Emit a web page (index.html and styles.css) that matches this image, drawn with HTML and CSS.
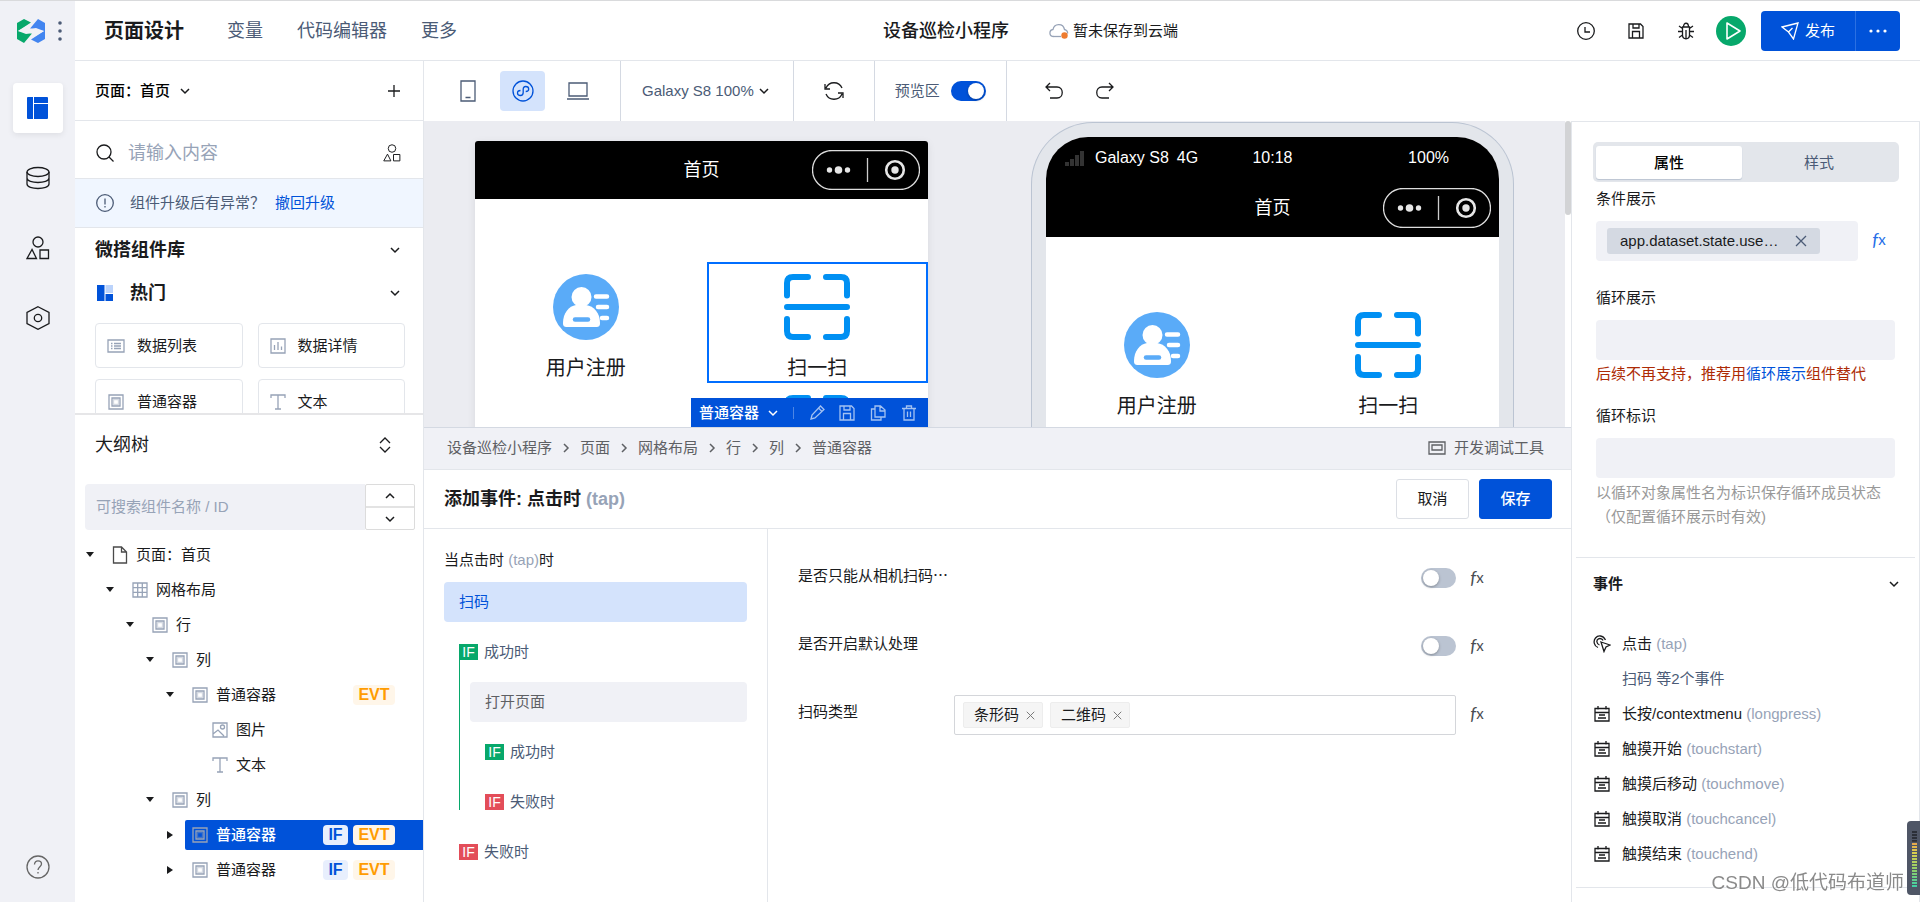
FILE: index.html
```html
<!DOCTYPE html>
<html lang="zh-CN">
<head>
<meta charset="utf-8">
<title>页面设计 - 设备巡检小程序</title>
<link rel="stylesheet" href="styles.css">
</head>
<body>
<svg class="defs" aria-hidden="true">
  <symbol id="i-down" viewBox="0 0 10 10"><path d="M1 3l4 4 4-4"/></symbol>
  <symbol id="i-up" viewBox="0 0 10 10"><path d="M1 7l4-4 4 4"/></symbol>
  <symbol id="i-right" viewBox="0 0 10 10"><path d="M3 1l4 4-4 4"/></symbol>
  <symbol id="i-x" viewBox="0 0 12 12"><path d="M1 1l10 10M11 1L1 11"/></symbol>
  <symbol id="i-box" viewBox="0 0 16 16"><path d="M1 1h14v14H1zM4 4h8v8H4z"/><path d="M5.500 5.500h5v5h-5z" opacity=".4"/></symbol>
  <symbol id="i-grid" viewBox="0 0 16 16"><path d="M1 1h14v14H1zM5.700 1v14M10.300 1v14M1 5.700h14M1 10.300h14"/></symbol>
  <symbol id="i-text" viewBox="0 0 16 16"><path d="M1 4V1h14v3M8 1v14M5 15h6"/></symbol>
  <symbol id="i-image" viewBox="0 0 16 16"><path d="M1 1h14v14H1zM1 12l5-4 6 6"/><circle cx="10.500" cy="5" r="2"/></symbol>
  <symbol id="i-page" viewBox="0 0 16 18"><path d="M1.500 1h8l5 5v11h-13zM9.500 1v5h5"/></symbol>
  <symbol id="i-list" viewBox="0 0 18 14"><path d="M1 1h16v12H1zM7 4.500h7M7 7h7M7 9.500h7M4 4.500h1.500M4 7h1.500M4 9.500h1.500"/></symbol>
  <symbol id="i-chart" viewBox="0 0 16 16"><path d="M1 1h14v14H1zM4.500 7v5M8 4v8M11.500 8.500V12"/></symbol>
  <symbol id="i-shapes" viewBox="0 0 24 24"><circle cx="12" cy="6" r="5"/><path d="M6 13.500L1 22.500h9.500zM14 14h8.500v8.500H14z"/></symbol>
  <symbol id="i-save" viewBox="0 0 16 16"><path d="M1 1h11.500L15 3.500V15H1zM5 1v4h6V1M4.500 15V8.500h7V15"/></symbol>
  <symbol id="i-event" viewBox="0 0 16 16"><path d="M1 2.500h14V15H1zM1 6.500h14M4 0v3.500M12 0v3.500M5 9h6M4 12h8"/></symbol>
  <symbol id="i-user" viewBox="0 0 66 66"><circle cx="33" cy="33" r="33" fill="#5aabf8"/><circle cx="28.500" cy="23" r="10" fill="#fff"/><path d="M10 49c0-10 6-17 13-18h10c8 1 14 8 14 18 0 3-1 4-4 4H14c-3 0-4-1-4-4z" fill="#fff"/><path d="M43 22.500h11M45 33h9M49 44h5" stroke="#fff" stroke-width="4.500" stroke-linecap="round"/><path d="M22 45.500h13" stroke="#5aabf8" stroke-width="4.500" stroke-linecap="round"/></symbol>
  <symbol id="i-scan" viewBox="0 0 66 66"><path d="M3 21.500V9q0-6 6-6h15M42 3h15q6 0 6 6v12.500M3 45v12q0 6 6 6h15M42 63h15q6 0 6-6V45M3 33h60" fill="none" stroke="#0090f3" stroke-width="6" stroke-linecap="round"/></symbol>
  <symbol id="i-capsule" viewBox="0 0 108 40"><rect x=".5" y=".5" width="107" height="39" rx="19.500" fill="none" stroke="#ddd"/><path d="M55.500 8v24" stroke="#ccc"/><circle cx="17.500" cy="20" r="2.700" fill="#e6e6e6"/><circle cx="26.500" cy="20" r="3.800" fill="#e6e6e6"/><circle cx="35.500" cy="20" r="2.700" fill="#e6e6e6"/><circle cx="83" cy="20" r="8.800" fill="none" stroke="#e6e6e6" stroke-width="2.600"/><circle cx="83" cy="20" r="3.700" fill="#e6e6e6"/></symbol>
</svg>

<div class="app">
  <nav class="rail" aria-label="主导航">
    <div class="brand">
      <svg class="logo" viewBox="0 0 28 24"><path d="M0 4L7 0l7 3.500L1 12l14 2.500L7 24l-7-4z" fill="#07a86b"/><path d="M28 4v16l-7 4-7-3.500L27 12l-14-2.500L21 0z" fill="#4285f0"/><path d="M1 12L14 4.500l2 1-4.500 4.500L19 9l8 3-13 7.500-2-1 4.500-4.500L9 15z" fill="#f0f1f6"/></svg>
      <svg class="kebab" viewBox="0 0 4 20"><circle cx="2" cy="2" r="1.800"/><circle cx="2" cy="10" r="1.800"/><circle cx="2" cy="18" r="1.800"/></svg>
    </div>
    <button class="rail-item active" aria-label="页面设计"><svg viewBox="0 0 22 22"><path d="M0 1a1 1 0 011-1h5v22H1a1 1 0 01-1-1zM7 0h13a1 1 0 011 1v5H7zM7 7h14v14a1 1 0 01-1 1H7z" fill="#0052d9"/></svg></button>
    <button class="rail-item" aria-label="数据源"><svg viewBox="0 0 24 24"><ellipse cx="12" cy="6" rx="11" ry="4.500"/><path d="M1 6v12c0 6 22 6 22 0V6M1 12c0 6 22 6 22 0"/></svg></button>
    <button class="rail-item" aria-label="组件"><svg><use href="#i-shapes"/></svg></button>
    <button class="rail-item" aria-label="设置"><svg viewBox="0 0 24 24"><path d="M12 .7l11 5.800v11L12 23.300 1 17.500v-11z"/><circle cx="12" cy="12" r="3.700"/></svg></button>
    <button class="rail-item help" aria-label="帮助"><svg viewBox="0 0 24 24"><circle cx="12" cy="12" r="11"/><path d="M8.500 9.500c0-5 7-4.500 7-.5 0 2.500-3.500 3-3.500 6M12 17v1.500"/></svg></button>
  </nav>

  <div class="main">
    <header class="topbar">
      <nav class="menu">
        <a class="current" href="#">页面设计</a><a href="#">变量</a><a href="#">代码编辑器</a><a href="#">更多</a>
      </nav>
      <div class="doc">
        <h1>设备巡检小程序</h1>
        <span class="cloud"><svg viewBox="0 0 20 16"><path d="M5 13.500c-5.500 0-5-6.500-1-7 1-6 10-7 11.500 0 2 .5 3.500 2 3 4" fill="none" stroke="#97a3b7" stroke-width="1.300"/><path d="M5 13.500h7" stroke="#97a3b7" stroke-width="1.300"/><circle cx="15.500" cy="12.500" r="3.200" fill="#ed7b2f"/></svg>暂未保存到云端</span>
      </div>
      <div class="actions">
        <button class="icon-btn" aria-label="历史"><svg viewBox="0 0 18 18"><circle cx="9" cy="9" r="8.300"/><path d="M8 5v5h5"/></svg></button>
        <button class="icon-btn" aria-label="保存"><svg><use href="#i-save"/></svg></button>
        <button class="icon-btn" aria-label="调试"><svg viewBox="0 0 18 18"><path d="M5.500 5h7v8c0 5-7 5-7 0zM6.500 5c0-5 5-5 5 0M9 8v8M1 9.500h4.500M12.500 9.500H17M2 4l3.500 2.500M16 4l-3.500 2.500M2 15.500L5.500 13M16 15.500L12.500 13"/></svg></button>
        <button class="run" aria-label="预览"><svg viewBox="0 0 30 30"><path d="M11 7v16l13-8z"/></svg></button>
        <div class="publish">
          <button class="pub-main"><svg viewBox="0 0 18 18"><path d="M1 5L17 1l-4.500 16-5-7zM7.500 10l4-4"/></svg>发布</button>
          <button class="pub-more" aria-label="更多"><svg viewBox="0 0 18 4"><circle cx="2" cy="2" r="1.600"/><circle cx="9" cy="2" r="1.600"/><circle cx="16" cy="2" r="1.600"/></svg></button>
        </div>
      </div>
    </header>

    <div class="workspace">
      <aside class="left">
        <div class="page-select">
          <button class="plain strong">页面：首页 <svg class="chev"><use href="#i-down"/></svg></button>
          <button class="plain" aria-label="新建页面"><svg class="plus" viewBox="0 0 12 12"><path d="M6 0v12M0 6h12"/></svg></button>
        </div>
        <div class="library">
          <div class="lib-search">
            <svg class="s18" viewBox="0 0 18 18"><circle cx="8" cy="8" r="7"/><path d="M13 13l4.500 4.500"/></svg>
            <input type="search" placeholder="请输入内容" aria-label="搜索组件">
            <svg class="s18"><use href="#i-shapes"/></svg>
          </div>
          <div class="notice">
            <svg class="s18" viewBox="0 0 18 18"><circle cx="9" cy="9" r="8.300"/><path d="M9 4.500v6M9 12v1.500"/></svg>
            <span>组件升级后有异常？</span><a href="#">撤回升级</a>
          </div>
          <h2 class="group">微搭组件库<svg class="chev"><use href="#i-down"/></svg></h2>
          <h3 class="group hot"><svg class="hot-icon" viewBox="0 0 16 16"><path d="M0 0h7.500v16H0zM8.500 9H16v7H8.500z" fill="#0052d9"/><path d="M8.500 0H16v8H8.500z" fill="#bbd3fb"/></svg>热门<svg class="chev"><use href="#i-down"/></svg></h3>
          <div class="cards">
            <button class="card"><svg class="wide"><use href="#i-list"/></svg>数据列表</button>
            <button class="card"><svg><use href="#i-chart"/></svg>数据详情</button>
            <button class="card"><svg class="wide"><use href="#i-box"/></svg>普通容器</button>
            <button class="card"><svg><use href="#i-text"/></svg>文本</button>
          </div>
        </div>
        <section class="outline">
          <h2>大纲树<svg viewBox="0 0 12 16"><path d="M1 6l5-5 5 5M1 10l5 5 5-5"/></svg></h2>
          <div class="tree-search">
            <input type="text" placeholder="可搜索组件名称 / ID" aria-label="搜索大纲树">
            <div class="stepper">
              <button aria-label="上一个"><svg class="chev"><use href="#i-up"/></svg></button>
              <button aria-label="下一个"><svg class="chev"><use href="#i-down"/></svg></button>
            </div>
          </div>
          <ul class="tree">
            <li class="d0"><i class="caret open"></i><div class="node"><svg class="dark"><use href="#i-page"/></svg>页面：首页</div></li>
            <li class="d1"><i class="caret open"></i><div class="node"><svg><use href="#i-grid"/></svg>网格布局</div></li>
            <li class="d2"><i class="caret open"></i><div class="node"><svg><use href="#i-box"/></svg>行</div></li>
            <li class="d3"><i class="caret open"></i><div class="node"><svg><use href="#i-box"/></svg>列</div></li>
            <li class="d4"><i class="caret open"></i><div class="node"><svg><use href="#i-box"/></svg>普通容器<span class="tags"><b class="evt">EVT</b></span></div></li>
            <li class="d5"><i class="caret"></i><div class="node"><svg><use href="#i-image"/></svg>图片</div></li>
            <li class="d5"><i class="caret"></i><div class="node"><svg><use href="#i-text"/></svg>文本</div></li>
            <li class="d3"><i class="caret open"></i><div class="node"><svg><use href="#i-box"/></svg>列</div></li>
            <li class="d4"><i class="caret closed"></i><div class="node selected"><svg><use href="#i-box"/></svg>普通容器<span class="tags"><b class="if">IF</b><b class="evt">EVT</b></span></div></li>
            <li class="d4"><i class="caret closed"></i><div class="node"><svg><use href="#i-box"/></svg>普通容器<span class="tags"><b class="if">IF</b><b class="evt">EVT</b></span></div></li>
          </ul>
        </section>
      </aside>

      <div class="editor">
        <div class="toolbar">
          <div class="tool devices">
            <button class="device" aria-label="手机"><svg viewBox="0 0 16 22"><path d="M1 1h14v20H1zM5.500 17.500h5"/></svg></button>
            <button class="device on" aria-label="小程序"><svg class="mini" viewBox="0 0 22 22"><circle cx="11" cy="11" r="10"/><path d="M8.500 10.500c-4 0-4 5 0 5 1.700 0 2.700-1 2.700-3v-3c0-2 1-3 2.500-3 4 0 4 5 0 5"/></svg></button>
            <button class="device" aria-label="电脑"><svg class="pc" viewBox="0 0 22 18"><path d="M2 1h18v13H2zM0 17h22"/></svg></button>
          </div>
          <div class="tool zoom"><button class="plain">Galaxy S8 100%<svg class="chev"><use href="#i-down"/></svg></button></div>
          <div class="tool reload"><button class="plain" aria-label="刷新"><svg viewBox="0 0 20 20"><path d="M2 7c3-7 13-7 16 0M18 13c-3 7-13 7-16 0M1 3v5h5M19 17v-5h-5"/></svg></button></div>
          <div class="tool preview"><label for="pv">预览区</label><input id="pv" type="checkbox" class="switch" checked></div>
          <div class="tool history">
            <button class="plain" aria-label="撤销"><svg viewBox="0 0 18 18"><path d="M5 1L1 5l4 4M1 5h11c7 0 7 11 0 11H5"/></svg></button>
            <button class="plain" aria-label="重做"><svg viewBox="0 0 18 18"><path d="M13 1l4 4-4 4M17 5H6c-7 0-7 11 0 11h7"/></svg></button>
          </div>
        </div>

        <div class="panes">
          <div class="centre">
            <div class="stage">
              <div class="canvas">
                <div class="navbar"><span>首页</span><svg class="capsule"><use href="#i-capsule"/></svg></div>
                <div class="grid">
                  <div class="col"><div class="cell"><svg><use href="#i-user"/></svg>用户注册</div></div>
                  <div class="col">
                    <div class="cell picked"><svg><use href="#i-scan"/></svg>扫一扫
                      <div class="cell-bar"><button class="plain">普通容器<svg class="chev"><use href="#i-down"/></svg></button><hr>
                        <button class="plain" aria-label="编辑"><svg viewBox="0 0 16 16"><path d="M2 14l1-4 8.500-9L15 4.500 6 13zM9.500 3l3.500 3.500"/></svg></button>
                        <button class="plain" aria-label="保存"><svg><use href="#i-save"/></svg></button>
                        <button class="plain" aria-label="复制"><svg viewBox="0 0 16 16"><path d="M5 1h5.500L15 5v7H5zM10 1v5h5M5 4H1.500v11H11v-3"/></svg></button>
                        <button class="plain" aria-label="删除"><svg viewBox="0 0 16 16"><path d="M1 3.500h14M5.500 3V1h5v2M3 3.500V15h10V3.500M6.500 6.500v5.500M9.500 6.500v5.500"/></svg></button>
                      </div>
                    </div>
                    <div class="cell"><svg><use href="#i-scan"/></svg></div>
                  </div>
                </div>
              </div>
              <div class="phone">
                <div class="screen">
                  <div class="status"><span class="carrier"><svg viewBox="0 0 20 15"><path d="M0 11h4v4H0zM5 8h4v7H5zM10 4h4v11h-4zM15 0h4v15h-4z" fill="#333"/></svg>Galaxy S8&ensp;4G</span><span>10:18</span><span class="battery">100%</span></div>
                  <div class="navbar"><span>首页</span><svg class="capsule"><use href="#i-capsule"/></svg></div>
                  <div class="grid">
                    <div class="col"><div class="cell"><svg><use href="#i-user"/></svg>用户注册</div></div>
                    <div class="col"><div class="cell"><svg><use href="#i-scan"/></svg>扫一扫</div></div>
                  </div>
                </div>
              </div>
              <div class="scrollbar"></div>
            </div>

            <div class="crumbs">
              <span>设备巡检小程序</span><svg class="chev"><use href="#i-right"/></svg><span>页面</span><svg class="chev"><use href="#i-right"/></svg><span>网格布局</span><svg class="chev"><use href="#i-right"/></svg><span>行</span><svg class="chev"><use href="#i-right"/></svg><span>列</span><svg class="chev"><use href="#i-right"/></svg><span>普通容器</span>
              <button class="plain devtools"><svg viewBox="0 0 18 14"><path d="M1 1h16v12H1zM4 4h10v5H4z"/></svg>开发调试工具</button>
            </div>

            <section class="event">
              <header class="event-head">
                <h2>添加事件: 点击时 <em>(tap)</em></h2>
                <button class="btn">取消</button><button class="btn primary">保存</button>
              </header>
              <div class="event-body">
                <div class="flow">
                  <p>当点击时 <em>(tap)</em>时</p>
                  <button class="step on">扫码</button>
                  <div class="branch line">
                    <div class="cond"><span class="flag">IF</span>成功时</div>
                    <div class="nested">
                      <button class="step">打开页面</button>
                      <div class="inner">
                        <div class="cond"><span class="flag">IF</span>成功时</div>
                        <div class="cond"><span class="flag fail">IF</span>失败时</div>
                      </div>
                    </div>
                  </div>
                  <div class="branch"><div class="cond"><span class="flag fail">IF</span>失败时</div></div>
                </div>
                <form class="form">
                  <div class="row"><label for="cam">是否只能从相机扫码…</label><input id="cam" type="checkbox" class="switch"><button type="button" class="fx"><i>f</i>x</button></div>
                  <div class="row"><label for="def">是否开启默认处理</label><input id="def" type="checkbox" class="switch"><button type="button" class="fx"><i>f</i>x</button></div>
                  <div class="row"><span class="lbl">扫码类型</span>
                    <div class="multi"><span class="chip">条形码<svg><use href="#i-x"/></svg></span><span class="chip">二维码<svg><use href="#i-x"/></svg></span></div>
                    <button type="button" class="fx"><i>f</i>x</button></div>
                </form>
              </div>
            </section>
          </div>

          <aside class="props">
            <div class="tabs"><button class="on">属性</button><button>样式</button></div>
            <div class="fields">
              <span class="lbl">条件展示</span>
              <div class="bind"><div class="box"><span class="expr">app.dataset.state.use…<svg><use href="#i-x"/></svg></span></div><button class="fx blue"><i>f</i>x</button></div>
              <label class="lbl" for="loop">循环展示</label>
              <input id="loop" type="text" class="box">
              <p class="warn">后续不再支持，推荐用<a href="#">循环展示</a>组件替代</p>
              <label class="lbl" for="key">循环标识</label>
              <input id="key" type="text" class="box">
              <p class="hint">以循环对象属性名为标识保存循环成员状态（仅配置循环展示时有效)</p>
            </div>
            <section class="events">
              <h2>事件<svg class="chev"><use href="#i-down"/></svg></h2>
              <ul>
                <li><svg class="tap" viewBox="0 0 18 18"><path d="M8 7l9 3-4 2-2 4.500zM5 12.500C1 11 0 6 2.500 3S10 0 12.500 5M6.500 10C3.500 9 3 5 5.500 3.800 7.500 3 9.500 4 10 5.500"/></svg><span>点击 <em>(tap)</em></span></li>
                <li><a href="#">扫码 等2个事件</a></li>
                <li><svg><use href="#i-event"/></svg><span>长按/contextmenu <em>(longpress)</em></span></li>
                <li><svg><use href="#i-event"/></svg><span>触摸开始 <em>(touchstart)</em></span></li>
                <li><svg><use href="#i-event"/></svg><span>触摸后移动 <em>(touchmove)</em></span></li>
                <li><svg><use href="#i-event"/></svg><span>触摸取消 <em>(touchcancel)</em></span></li>
                <li><svg><use href="#i-event"/></svg><span>触摸结束 <em>(touchend)</em></span></li>
              </ul>
            </section>
          </aside>
        </div>
      </div>
    </div>
  </div>
</div>
<div class="meter"></div>
<div class="watermark">CSDN @低代码布道师</div>
</body>
</html>
```

FILE: styles.css
```css
* { box-sizing: border-box; }
body, h1, h2, h3, p, ul { margin: 0; padding: 0; }
body { font: 15px/24px "Liberation Sans", "Noto Sans CJK SC", sans-serif; color: #1a1b1d; background: #fff; }
ul { list-style: none; }
a { color: #0052d9; text-decoration: none; }
em { font-style: normal; color: #97a3b7; }
button, input { font: inherit; color: inherit; margin: 0; }
button { padding: 0; border: 0; background: none; display: flex; align-items: center; justify-content: center; }
svg { fill: none; stroke: currentColor; stroke-width: 1.300; flex: none; display: block; }
.defs { position: absolute; width: 0; height: 0; }
#i-user, #i-scan, #i-capsule { stroke: none; }
.chev { width: 10px; height: 10px; stroke-width: 1.500; color: #1a1b1d; }
.strong { font-weight: 500; color: #000; }

.app { display: flex; height: 100vh; min-height: 800px; border-top: 1px solid #d9dadc; }
.main { flex: 1; min-width: 0; display: flex; flex-direction: column; }

/* navigation rail */
.rail { width: 75px; flex: none; background: #f0f1f6; display: flex; flex-direction: column; align-items: center; gap: 20px; padding-bottom: 10px; }
.brand { align-self: stretch; display: flex; align-items: center; gap: 13px; height: 60px; padding-left: 17px; margin-bottom: 2px; }
.logo { width: 28px; height: 24px; stroke: none; }
.kebab { width: 4px; height: 20px; stroke: none; fill: #4b5b76; }
.rail-item { width: 50px; height: 50px; border-radius: 4px; }
.rail-item svg { width: 24px; height: 24px; }
.rail-item.active { background: #fff; box-shadow: 0 2px 6px rgba(0, 0, 0, .08); }
.rail-item.active svg { width: 22px; height: 22px; stroke: none; }
.rail-item.help { margin-top: auto; color: #666; }

/* top bar */
.topbar { height: 60px; flex: none; display: grid; grid-template-columns: 1fr auto 1fr; align-items: center; border-bottom: 1px solid #e3e6eb; padding: 0 20px 0 29px; }
.menu { display: flex; align-items: center; gap: 34px; font-size: 18px; }
.menu a { color: #4b5b76; }
.menu .current { font-size: 20px; font-weight: 700; color: #1a1b1d; margin-right: 9px; }
.doc { display: flex; align-items: center; gap: 40px; margin-left: 57px; }
.doc h1 { font-size: 18px; font-weight: 500; }
.cloud { display: flex; align-items: center; gap: 4px; }
.cloud svg { width: 20px; height: 16px; stroke: none; }
.actions { display: flex; align-items: center; justify-content: flex-end; }
.icon-btn { width: 50px; height: 40px; }
.icon-btn svg { width: 18px; height: 18px; }
.icon-btn:nth-child(2) svg { width: 16px; height: 16px; }
.run { width: 30px; height: 30px; border-radius: 50%; background: #07a86b; color: #fff; margin: 0 15px 0 5px; }
.run svg { width: 30px; height: 30px; stroke-width: 1.600; stroke-linejoin: round; }
.publish { display: flex; height: 40px; background: #0052d9; border-radius: 4px; color: #fff; }
.pub-main { width: 95px; gap: 6px; border-right: 1px solid #2b70e2; }
.pub-main svg { width: 18px; height: 18px; }
.pub-more { width: 44px; }
.pub-more svg { width: 18px; height: 4px; fill: #fff; stroke: none; }

.workspace { flex: 1; min-height: 0; display: flex; }

/* left panel */
.left { width: 349px; flex: none; display: flex; flex-direction: column; border-right: 1px solid #e3e6eb; }
.page-select { height: 60px; flex: none; display: flex; align-items: center; justify-content: space-between; padding: 0 23px 0 20px; border-bottom: 1px solid #e3e6eb; }
.page-select .chev { margin-left: 10px; }
.plus { width: 12px; height: 12px; }
.library { flex: 1; min-height: 0; overflow: hidden; }
.s18 { width: 18px; height: 18px; }
.lib-search { display: flex; align-items: center; gap: 14px; height: 58px; padding: 6px 22px 0 21px; border-bottom: 1px solid #e3e6eb; }
.lib-search input { flex: 1; min-width: 0; border: 0; background: none; padding: 0; font-size: 18px; outline: 0; }
::placeholder { color: #97a3b7; opacity: 1; }
.notice { display: flex; align-items: center; gap: 10px; height: 49px; padding: 0 21px; background: #f0f6ff; border-bottom: 1px solid #e3e6eb; color: #4b5b76; }
.notice svg { margin-right: 6px; }
.group { display: flex; align-items: center; height: 43px; padding: 0 23px 0 20px; font-size: 18px; font-weight: 700; }
.group .chev { margin-left: auto; }
.hot-icon { width: 16px; height: 16px; stroke: none; margin: 0 17px 0 2px; }
.cards { display: grid; grid-template-columns: 1fr 1fr; gap: 11px 15px; padding: 9px 18px 0 20px; }
.card { height: 45px; justify-content: flex-start; gap: 12px; padding-left: 11px; border: 1px solid #e3e6eb; border-radius: 4px; }
.card svg { width: 16px; height: 16px; color: #97a3b7; }
.card .wide { width: 18px; }

.outline { flex: none; height: 489px; border-top: 2px solid #e6e6e8; }
.outline h2 { height: 60px; display: flex; align-items: center; justify-content: space-between; padding: 0 32px 0 20px; font-size: 18px; font-weight: 400; }
.outline h2 svg { width: 12px; height: 16px; }
.tree-search { display: flex; height: 46px; margin: 9px 8px 7px 10px; }
.tree-search input { flex: 1; min-width: 0; border: 0; background: #f0f1f6; border-radius: 4px 0 0 4px; padding: 0 11px; }
.stepper { width: 50px; display: flex; flex-direction: column; border: 1px solid #dcdcdc; border-radius: 2px; }
.stepper button { flex: 1; }
.stepper button + button { border-top: 2px solid #e3e3e3; }
.tree li { display: flex; align-items: center; height: 35px; padding-left: 10px; }
.tree .d1 { padding-left: 30px; }
.tree .d2 { padding-left: 50px; }
.tree .d3 { padding-left: 70px; }
.tree .d4 { padding-left: 90px; }
.tree .d5 { padding-left: 110px; }
.caret { width: 10px; height: 10px; display: flex; align-items: center; justify-content: center; }
.caret.open::before { content: ""; border: 4px solid transparent; border-top: 5px solid #1a1b1d; border-bottom: 0; }
.caret.closed::before { content: ""; border: 4px solid transparent; border-left: 6px solid #1a1b1d; border-right: 0; }
.node { flex: 1; display: flex; align-items: center; gap: 8px; height: 30px; margin-left: 10px; padding-left: 7px; }
.node svg { width: 16px; height: 16px; color: #97a3b7; }
.node .dark { height: 18px; color: #4a4a4a; }
.node.selected { background: #0052d9; color: #fff; font-weight: 500; border-radius: 2px 0 0 2px; }
.tags { margin-left: auto; display: flex; gap: 5px; padding-right: 28px; font-size: 16px; line-height: 20px; text-align: center; }
.tags b { border-radius: 4px; }
.if { width: 25px; background: #e8effd; color: #0052d9; }
.evt { width: 42px; background: #fff6e9; color: #ff9c00; }

/* editor toolbar */
.editor { flex: 1; min-width: 0; display: flex; flex-direction: column; }
.toolbar { display: flex; height: 60px; flex: none; color: #4b5b76; }
.tool { display: flex; align-items: center; border-right: 1px solid #d4d9e2; padding: 0 20px; }
.devices { gap: 10px; padding: 0 20px 0 21px; }
.device { width: 45px; height: 40px; border-radius: 4px; }
.device svg { width: 16px; height: 22px; }
.device .mini { width: 22px; }
.device .pc { width: 22px; height: 18px; }
.device.on { background: #d4e3fc; color: #0052d9; }
.zoom .plain { gap: 5px; }
.zoom { padding: 0 24px 0 21px; }
.reload { width: 81px; justify-content: center; color: #1a1b1d; }
.reload svg { width: 20px; height: 20px; }
.preview { gap: 11px; }
.history { border: 0; gap: 33px; padding: 0 38px; color: #1a1b1d; }
.history svg { width: 18px; height: 18px; }
.switch { appearance: none; width: 35px; height: 20px; border-radius: 10px; background: #bbc4d2; flex: none; }
.switch::before { content: ""; display: block; width: 16px; height: 16px; margin: 2px; border-radius: 50%; background: #fff; box-shadow: 0 1px 3px rgba(0, 0, 0, .3); }
.switch:checked { background: #0052d9; }
.switch:checked::before { margin-left: 17px; }

.panes { flex: 1; min-height: 0; display: flex; }
.centre { flex: 1; min-width: 0; display: flex; flex-direction: column; }

/* stage */
.stage { flex: 1; min-height: 0; position: relative; display: flex; align-items: flex-start; gap: 103px; padding-left: 51px; background: #ebecf1; border-right: 6px solid #fff; font-size: 20px; overflow: clip; overflow-clip-margin: border-box; }
.canvas { width: 453px; flex: none; margin-top: 20px; background: #fff; border-radius: 3px 3px 0 0; box-shadow: 0 2px 8px rgba(0, 0, 0, .08); }
.navbar { position: relative; display: flex; align-items: center; justify-content: center; height: 58px; background: #000; color: #fff; font-size: 18px; border-radius: 3px 3px 0 0; }
.capsule { position: absolute; right: 8px; top: 9px; width: 108px; height: 40px; }
.grid { display: grid; grid-template-columns: 1fr 1fr; gap: 10px; padding: 63px 0 130px; }
.cell { position: relative; display: flex; flex-direction: column; align-items: center; gap: 13px; padding-top: 12px; line-height: 30px; }
.cell > svg { width: 66px; height: 66px; }
.picked { outline: 2px solid #006eff; outline-offset: -2px; }
.cell-bar { position: absolute; z-index: 1; top: 136px; right: 0; height: 30px; width: 237px; display: flex; align-items: center; justify-content: space-between; padding: 0 11px 0 8px; background: #0052d9; color: #fff; font-size: 15px; font-weight: 500; }
.cell-bar svg { width: 16px; height: 16px; color: #a3c2f2; }
.cell-bar .chev { width: 10px; height: 10px; margin-left: 9px; color: #fff; }
.cell-bar hr { width: 1px; height: 12px; margin: 0; border: 0; background: #4d86e4; }
.phone { width: 483px; flex: none; margin-top: 1px; padding: 14px 14px 0; background: #e3e6eb; border: 1px solid #bbc4d2; border-bottom: 0; border-radius: 62px 62px 0 0; }
.screen { background: #fff; border-radius: 42px 42px 0 0; overflow: hidden; }
.status { display: grid; grid-template-columns: 1fr auto 1fr; align-items: center; height: 42px; padding: 0 19px; background: #000; color: #fff; font-size: 16px; }
.carrier { display: flex; align-items: center; gap: 10px; }
.carrier svg { width: 20px; height: 15px; stroke: none; }
.battery { text-align: right; padding-right: 31px; }
.screen .navbar { border-radius: 0; }
.scrollbar { position: absolute; right: -6px; top: 0; width: 6px; height: 94px; border-radius: 3px; background: #d2d3d5; }

.crumbs { height: 43px; flex: none; display: flex; align-items: center; gap: 9px; padding: 0 27px 2px 23px; background: #f0f1f6; border-top: 1px solid #d4d9e2; border-bottom: 1px solid #e3e6eb; color: #5e6064; }
.crumbs .chev { color: #5e6064; }
.devtools { margin-left: auto; gap: 8px; }
.devtools svg { width: 18px; height: 14px; }

/* event editor */
.event { height: 432px; flex: none; display: flex; flex-direction: column; }
.event-head { height: 59px; flex: none; display: flex; align-items: center; gap: 10px; padding: 0 19px 0 20px; border-bottom: 1px solid #e3e6eb; }
.event-head h2 { font-size: 18px; font-weight: 700; margin-right: auto; }
.btn { width: 73px; height: 40px; border: 1px solid #dcdfe5; border-radius: 3px; }
.btn.primary { border-color: #0052d9; background: #0052d9; color: #fff; font-weight: 500; }
.event-body { flex: 1; display: flex; }
.flow { width: 344px; flex: none; padding: 19px 20px 0; border-right: 1px solid #e3e6eb; }
.flow p { margin-bottom: 10px; }
.step { width: 100%; height: 40px; justify-content: flex-start; padding-left: 15px; border-radius: 4px; background: #f0f1f6; color: #5e6064; }
.step.on { background: #d4e3fc; color: #0052d9; margin-bottom: 22px; }
.branch { position: relative; margin-left: 15px; margin-bottom: 34px; }
.branch.line { border-left: 1px solid #07a86b; }
.cond { display: flex; align-items: flex-start; gap: 6px; height: 16px; line-height: 16px; color: #4b5b76; }
.branch.line > .cond { margin-left: -1px; }
.flag { width: 19px; height: 16px; background: #07a86b; color: #fff; text-align: center; font-size: 14px; }
.flag.fail { background: #e34d59; }
.nested { padding: 22px 0 0 10px; }
.inner { display: flex; flex-direction: column; gap: 34px; padding: 22px 0 0 15px; }
.form { flex: 1; padding: 30px 73px 0 30px; }
.row { display: flex; align-items: flex-start; height: 68px; }
.row label, .row .lbl { width: 156px; flex: none; font-family: "Noto Sans CJK SC", sans-serif; line-height: 32px; }
.row .switch { margin: 9px 0 0 auto; }
.fx { flex: none; height: 36px; width: 42px; font-family: Lato, sans-serif; color: #4a4d52; line-height: 20px; }
.fx i { font-size: 18px; }
.fx.blue { color: #266fe8; }
.multi { flex: 1; height: 40px; display: flex; align-items: center; gap: 7px; padding: 0 8px; border: 1px solid #d4d6da; border-radius: 2px; }
.chip { display: flex; align-items: center; gap: 7px; height: 26px; padding: 0 7px 0 10px; background: #f5f5f5; border: 1px solid #ededed; border-radius: 2px; }
.chip svg { width: 9px; height: 9px; color: #777; }

/* properties */
.props { width: 349px; flex: none; border: 1px solid #e3e6eb; border-width: 1px 1px 0; overflow: hidden; }
.tabs { display: flex; height: 40px; margin: 20px 20px 4px 21px; padding: 4px 3px 3px; background: #e3e6eb; border-radius: 5px; color: #4b5b76; }
.tabs button { flex: 1; border-radius: 3px; }
.tabs .on { flex: 0 0 146px; background: #fff; color: #000; font-weight: 500; box-shadow: 0 1px 1px #bbc4d2; }
.fields { padding: 0 24px; }
.fields .lbl { display: block; margin-bottom: 11px; font-family: "Noto Sans CJK SC", sans-serif; }
.box { display: flex; align-items: center; width: 100%; height: 40px; border: 0; border-radius: 4px; background: #f0f1f6; padding: 0 11px; }
.bind { display: flex; margin: 0 -5px 24px 0; }
.bind .box { flex: 1; width: auto; }
.expr { display: flex; align-items: center; justify-content: space-between; width: 213px; height: 26px; padding: 0 13px; background: #d4d9e2; border-radius: 3px; }
.expr svg { width: 12px; height: 12px; color: #4b5b76; }
.warn { margin: 2px 0 17px; color: #ad2b05; }
.hint { margin: 3px -4px 28px 0; color: #999; }
.events { margin: 0 4px; border-top: 1px solid #e3e6eb; border-bottom: 1px solid #e3e6eb; padding: 0 16px 16px 17px; }
.events h2 { display: flex; align-items: center; justify-content: space-between; height: 52px; margin-bottom: 16px; font-size: 15px; font-weight: 700; }
.events li { display: flex; align-items: center; gap: 11px; height: 35px; }
.events li svg { width: 18px; height: 16px; }
.events li .tap { height: 18px; }
.events li a { margin-left: 29px; color: #4b5b76; }

.meter { position: fixed; right: 0; bottom: 7px; width: 13px; height: 74px; padding: 9px 3px 8px 5px; border-radius: 4px 0 0 4px; background: #4f5666; }
.meter::before { content: ""; display: block; height: 100%; background: repeating-linear-gradient(#4f5666 0 1px, transparent 1px 3px), linear-gradient(#2b2f38 0 20%, #e8a54b 22%, #d9cf4e 40%, #8fce6a 70%, #3fcfa6); }
.watermark { position: fixed; right: 16px; bottom: 6px; font-size: 19px; line-height: 26px; color: #8a8a8a; text-shadow: -1px -1px 0 #fff; }
```
